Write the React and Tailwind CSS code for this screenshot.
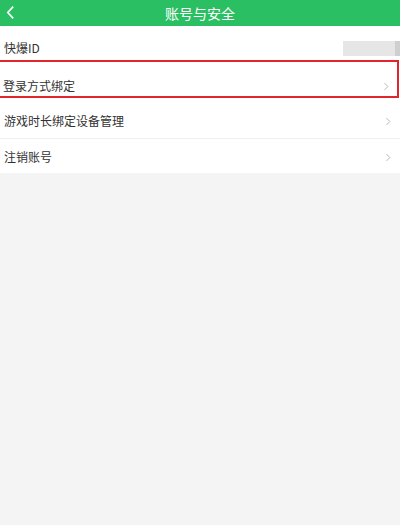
import React from 'react';

const Chevron = ({ className }) => (
  <svg viewBox="0 0 8 12" className={className} fill="none" stroke="currentColor" strokeWidth="1.3">
    <path d="M2 1.5l4.5 4.5L2 10.5" />
  </svg>
);

const App = () => {
  return (
    <div
      className="w-[400px] h-[525px] bg-[#f4f4f4] flex flex-col"
      style={{ fontFamily: '"Noto Sans CJK SC", "Noto Sans", sans-serif' }}
    >
      <div className="h-[26px] bg-[#2bbf63] flex items-center relative">
        <svg viewBox="0 0 10 16" className="absolute left-[6px] top-[5px] w-[9px] h-[15px] text-white" fill="none" stroke="currentColor" strokeWidth="1.8">
          <path d="M8 1.5L2 8l6 6.5" />
        </svg>
        <div className="flex-1 text-center text-white text-[14px] leading-none">账号与安全</div>
      </div>

      <div className="bg-white flex flex-col">
        {/* 快爆ID */}
        <div className="h-[34px] flex items-start justify-between pl-[4px] pt-[15px]">
          <span className="text-[12px] text-[#333] leading-[14px]">快爆ID</span>
          <div className="flex mt-[0px]">
            <div className="w-[52px] h-[15px] bg-[#e6e6e6]" />
            <div className="w-[5px] h-[15px] bg-[#cfcfcf]" />
          </div>
        </div>

        {/* highlighted row */}
        <div className="h-[38px] mr-[1px] border-2 border-l-0 border-[#e0262a] flex items-start justify-between pl-[3px] pr-[8px] pt-[17px]">
          <span className="text-[12px] text-[#333] leading-[14px]">登录方式绑定</span>
          <Chevron className="w-[6px] h-[9px] text-[#b5b5b5] mt-[3px]" />
        </div>

        <div className="h-[41px] flex items-start justify-between pl-[4px] pr-[9px] pt-[16px] border-b border-[#efefef] mx-[0px]">
          <span className="text-[12px] text-[#333] leading-[14px]">游戏时长绑定设备管理</span>
          <Chevron className="w-[6px] h-[9px] text-[#b5b5b5] mt-[3px]" />
        </div>

        <div className="h-[34px] flex items-start justify-between pl-[4px] pr-[9px] pt-[11px]">
          <span className="text-[12px] text-[#333] leading-[14px]">注销账号</span>
          <Chevron className="w-[6px] h-[9px] text-[#b5b5b5] mt-[3px]" />
        </div>
      </div>
    </div>
  );
};

export default App;
